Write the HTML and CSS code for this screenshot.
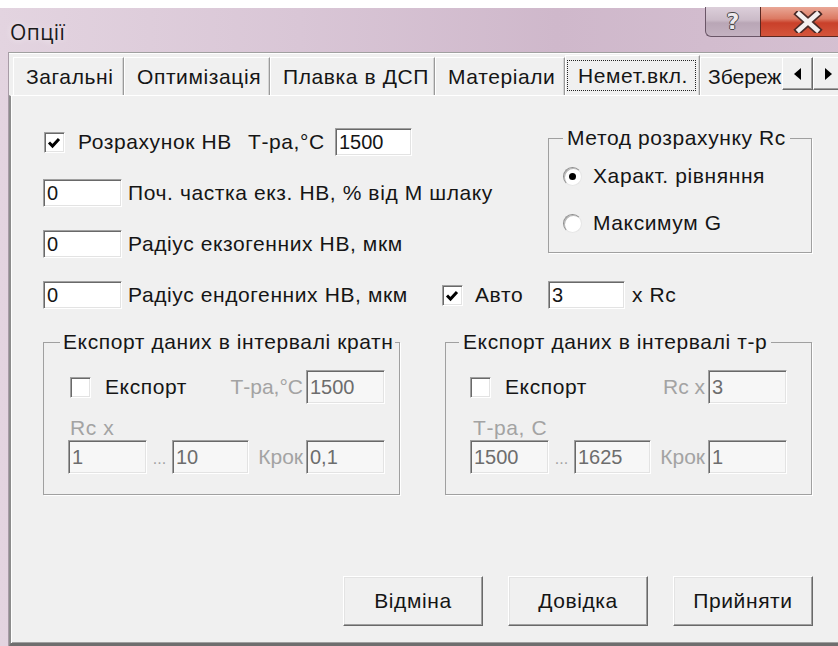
FILE: index.html
```html
<!DOCTYPE html>
<html lang="uk">
<head>
<meta charset="utf-8">
<title>Опції</title>
<link rel="stylesheet" href="styles.css">
</head>
<body>
<div class="window">
  <header class="titlebar">
    <span class="title">Опції</span>
    <div class="caption-btns">
      <div class="cbtn help"><span>?</span></div>
      <div class="cbtn close">
        <svg width="30" height="22" viewBox="0 0 30 22">
          <path d="M6 3 L24 19 M24 3 L6 19" stroke="#4b2b28" stroke-width="8" stroke-linecap="square"/>
          <path d="M6 3 L24 19 M24 3 L6 19" stroke="#f4f0f0" stroke-width="4.6" stroke-linecap="square"/>
        </svg>
      </div>
    </div>
  </header>

  <div class="client">
    <div class="tabstrip">
      <div class="tabs">
        <div class="tab t1">Загальні</div>
        <div class="tab t2">Оптимізація</div>
        <div class="tab t3">Плавка в ДСП</div>
        <div class="tab t4">Матеріали</div>
        <div class="tab t5 sel"><span class="focus">Немет.вкл.</span></div>
        <div class="tab t6">Збереж</div>
      </div>
      <div class="scroll-btns">
        <div class="sbtn"><i class="tri left"></i></div>
        <div class="sbtn"><i class="tri right"></i></div>
      </div>
    </div>

    <div class="sheet">
      <div class="top">
        <div class="params">
          <div class="row">
            <span class="check on"><svg width="21" height="21" viewBox="0 0 21 21"><polyline points="5,10.5 8.5,14 15,7" fill="none" stroke="#000" stroke-width="3"/></svg></span>
            <span class="lbl w-calc">Розрахунок НВ</span>
            <span class="lbl w-temp">Т-ра,°С</span>
            <span class="edit e-temp">1500</span>
          </div>
          <div class="row">
            <span class="edit e-num">0</span>
            <span class="lbl after-edit">Поч. частка екз. НВ, % від М шлаку</span>
          </div>
          <div class="row">
            <span class="edit e-num">0</span>
            <span class="lbl after-edit">Радіус екзогенних НВ, мкм</span>
          </div>
        </div>
        <fieldset class="group method">
          <legend>Метод розрахунку Rc</legend>
          <div class="radio-row"><span class="radio on"></span>Характ. рівняння</div>
          <div class="radio-row second"><span class="radio"></span>Максимум G</div>
        </fieldset>
      </div>

      <div class="row row-d">
        <span class="edit e-num">0</span>
        <span class="lbl after-edit w-endo">Радіус ендогенних НВ, мкм</span>
        <span class="check on"><svg width="21" height="21" viewBox="0 0 21 21"><polyline points="5,10.5 8.5,14 15,7" fill="none" stroke="#000" stroke-width="3"/></svg></span>
        <span class="lbl w-auto">Авто</span>
        <span class="edit e-mult">3</span>
        <span class="lbl x-rc">x Rc</span>
      </div>

      <div class="exports">
        <fieldset class="group export ex-left">
          <legend>Експорт даних в інтервалі кратн</legend>
          <div class="ex-grid">
            <div class="ex-head">
              <span class="check"></span>
              <span class="lbl ex-name">Експорт</span>
              <span class="lbl dis push">Т-ра,°С</span>
            </div>
            <span class="edit big dis-edit">1500</span>
            <span class="lbl dis sub">Rc x</span>
            <span class="edit big dis-edit">1</span>
            <span class="lbl dis dots">...</span>
            <span class="edit big dis-edit">10</span>
            <span class="lbl dis step">Крок</span>
            <span class="edit big dis-edit">0,1</span>
          </div>
        </fieldset>
        <fieldset class="group export ex-right">
          <legend>Експорт даних в інтервалі т-р</legend>
          <div class="ex-grid">
            <div class="ex-head">
              <span class="check"></span>
              <span class="lbl ex-name">Експорт</span>
              <span class="lbl dis push">Rc x</span>
            </div>
            <span class="edit big dis-edit">3</span>
            <span class="lbl dis sub">Т-ра, С</span>
            <span class="edit big dis-edit">1500</span>
            <span class="lbl dis dots">...</span>
            <span class="edit big dis-edit">1625</span>
            <span class="lbl dis step">Крок</span>
            <span class="edit big dis-edit">1</span>
          </div>
        </fieldset>
      </div>

      <div class="buttons">
        <button class="btn">Відміна</button>
        <button class="btn">Довідка</button>
        <button class="btn">Прийняти</button>
      </div>
    </div>
  </div>
</div>
</body>
</html>
```

FILE: styles.css
```css
* { box-sizing: border-box; }

html, body {
  margin: 0;
  padding: 0;
}

body {
  width: 838px;
  height: 646px;
  overflow: hidden;
  background: #ffffff;
  font-family: "Liberation Sans", Arial, sans-serif;
  font-size: 21px;
  letter-spacing: 0.6px;
  color: #151515;
}

/* ---------- window frame ---------- */
.window {
  margin-top: 8px;
  width: 856px;
  height: 638px;
  padding-left: 8px;
  display: flex;
  flex-direction: column;
  background: linear-gradient(90deg, #e3d4e0 0%, #d9c6d6 35%, #cfb8cb 65%, #d5c0d1 100%);
}

.titlebar {
  height: 44px;
  flex: none;
  display: flex;
  align-items: flex-start;
}

.title {
  font-family: "Open Sans", "Liberation Sans", sans-serif;
  font-size: 21px;
  letter-spacing: 0.4px;
  line-height: 24px;
  padding: 12px 0 0 2px;
  color: #1a1a1a;
  text-shadow: 0 0 6px rgba(255, 255, 255, 0.7);
}

.caption-btns {
  margin-left: auto;
  margin-top: -1px;
  display: flex;
}

.cbtn {
  height: 30px;
  display: flex;
  align-items: center;
  justify-content: center;
  border: 1px solid #6a5667;
  border-top: none;
}

.cbtn.help {
  width: 55px;
  border-radius: 0 0 0 6px;
  border-right: none;
  background: linear-gradient(180deg, #dccfda 0%, #cbbbc8 45%, #b9a6b6 55%, #c4b2c1 100%);
}

.cbtn.help span {
  font-family: "DejaVu Sans", sans-serif;
  font-weight: bold;
  font-size: 22px;
  line-height: 1;
  letter-spacing: 0;
  color: #eeeaee;
  text-shadow: 1px 0 0 #444, -1px 0 0 #444, 0 1px 0 #444, 0 -1px 0 #444;
}

.cbtn.close {
  width: 96px;
  border-color: #5b2820;
  border-radius: 0 0 6px 0;
  background: linear-gradient(180deg, #e9a796 0%, #dc7a63 40%, #c9402a 55%, #d4553b 100%);
}

/* ---------- client area ---------- */
.client {
  flex: 1;
  display: flex;
  flex-direction: column;
  background: #f0f0f0;
  border-top: 1px solid #a0a0a0;
  border-left: 1px solid #a89ca7;
  box-shadow: inset 0 1px 0 #ffffff;
  padding-top: 2px;
}

.tabstrip {
  height: 40px;
  flex: none;
  display: flex;
  padding-left: 4px;
}

.tabs {
  width: 769px;
  flex: none;
  display: flex;
  align-items: flex-end;
  overflow: hidden;
}

.tab {
  flex: none;
  height: 38px;
  display: flex;
  align-items: center;
  padding-left: 12px;
  white-space: nowrap;
  border-top: 1px solid #ffffff;
  border-left: 1px solid #ffffff;
  border-right: 1px solid #9a9a9a;
  box-shadow: inset -1px 0 0 #d4d4d4;
}

.t1 { width: 111px; }
.t2 { width: 146px; }
.t3 { width: 165px; }
.t4 { width: 130px; }
.t5 { width: 135px; }

.t6 {
  width: 82px;
  padding-left: 7px;
  letter-spacing: 0;
  border-right: none;
  box-shadow: none;
}

.tab.sel {
  height: 40px;
  padding: 4px 3px 4px 1px;
  align-items: stretch;
}

.focus {
  flex: 1;
  display: flex;
  align-items: center;
  padding-left: 10px;
  border: 1px dotted #222;
}

.scroll-btns {
  display: flex;
  margin-top: 2px;
}

.sbtn {
  width: 31px;
  height: 33px;
  display: flex;
  align-items: center;
  justify-content: center;
  background: #f0f0f0;
  border: 1px solid;
  border-color: #ffffff #696969 #696969 #ffffff;
  box-shadow: inset -1px -1px 0 #a0a0a0;
}

.tri {
  width: 0;
  height: 0;
  border-top: 6px solid transparent;
  border-bottom: 6px solid transparent;
}

.tri.left { border-right: 7px solid #000; }
.tri.right { border-left: 7px solid #000; }

/* ---------- tab sheet ---------- */
.sheet {
  flex: 1;
  border-top: 1px solid #ffffff;
  border-left: 2px solid #8c8c8c;
  border-bottom: 3px solid #6e6e6e;
  box-shadow: inset 1px 0 0 #ffffff, inset 0 -1px 0 #a0a0a0;
  padding: 32px 0 0 32px;
}

.top {
  display: grid;
  grid-template-columns: 505px 264px;
  align-items: start;
}

.params {
  display: flex;
  flex-direction: column;
  gap: 23px;
}

.row {
  height: 28px;
  display: flex;
  align-items: center;
}

.lbl {
  flex: none;
  white-space: nowrap;
  line-height: 24px;
}

.check {
  flex: none;
  width: 21px;
  height: 21px;
  background: #ffffff;
  border: 1px solid;
  border-color: #a0a0a0 #ffffff #ffffff #a0a0a0;
  box-shadow: inset 1px 1px 0 #696969, inset -1px -1px 0 #e3e3e3;
}

.check svg { display: block; margin: -1px 0 0 -1px; }

.params .check { margin-left: 1px; }
.w-calc { margin-left: 13px; width: 170px; }
.w-temp { width: 87px; }

.edit {
  flex: none;
  height: 28px;
  display: flex;
  align-items: center;
  padding-left: 3px;
  background: #ffffff;
  border: 1px solid;
  border-color: #a0a0a0 #ffffff #ffffff #a0a0a0;
  box-shadow: inset 1px 1px 0 #696969, inset -1px -1px 0 #e3e3e3;
  font-size: 20px;
  letter-spacing: 0;
  white-space: nowrap;
}

.e-temp { width: 77px; }
.e-num { width: 79px; }
.e-mult { width: 77px; }
.after-edit { margin-left: 6px; }

/* group boxes */
.group {
  margin: 0;
  min-width: 0;
  border: 1px solid #a0a0a0;
  box-shadow: 1px 1px 0 #ffffff;
}

.group legend {
  line-height: 24px;
  padding: 0 4px;
  white-space: nowrap;
}

.method {
  margin-top: -2px;
  padding: 11px 0 14px 14px;
}

.radio-row {
  height: 30px;
  display: flex;
  align-items: center;
  gap: 11px;
}

.radio-row.second { margin-top: 17px; }

.radio {
  flex: none;
  width: 19px;
  height: 19px;
  border-radius: 50%;
  background: #ffffff;
  border: 1px solid;
  border-color: #8e8e8e #e6e6e6 #e6e6e6 #8e8e8e;
  box-shadow: inset 1px 1px 0 #b9b9b9;
  display: flex;
  align-items: center;
  justify-content: center;
}

.radio.on::after {
  content: "";
  width: 7px;
  height: 7px;
  border-radius: 50%;
  background: #000;
}

.row-d { margin-top: 23px; }
.w-endo { width: 314px; }
.w-auto { margin-left: 12px; width: 73px; }
.x-rc { margin-left: 7px; }

/* export groups */
.exports {
  display: flex;
  gap: 45px;
  margin-top: 21px;
}

.export {
  padding: 16px 0 20px 24px;
}

.ex-left { width: 357px; }
.ex-right { width: 367px; }

.ex-left legend {
  margin-left: -8px;
  padding: 0 1px 0 3px;
  max-width: 338px;
  overflow: hidden;
}

.ex-right legend { margin-left: -11px; }

.ex-grid {
  display: grid;
  grid-template-columns: 79px 25px 77px 57px 79px;
}

.ex-head {
  grid-column: 1 / 5;
  display: flex;
  align-items: center;
}

.ex-head .check { margin-left: 2px; }
.ex-right .ex-head .check { margin-left: 0; }
.ex-name { margin-left: 14px; }

.push {
  margin-left: auto;
  padding-right: 3px;
  letter-spacing: 0;
}

.dis { color: #a3a3a3; }

.edit.big { height: 34px; }

.dis-edit {
  background: #f7f7f7;
  color: #6d6d6d;
}

.sub {
  grid-column: 1 / -1;
  height: 36px;
  display: flex;
  align-items: flex-end;
  padding-left: 2px;
}

.ex-right .sub { padding-left: 3px; }

.dots {
  display: flex;
  align-items: flex-end;
  justify-content: center;
  padding-bottom: 3px;
  font-size: 16px;
  letter-spacing: 0;
}

.step {
  display: flex;
  align-items: center;
  justify-content: flex-end;
  padding-right: 3px;
  letter-spacing: 0;
}

/* dialog buttons */
.buttons {
  display: flex;
  gap: 25px;
  margin-top: 81px;
  padding-left: 300px;
}

.btn {
  width: 140px;
  height: 50px;
  padding: 0;
  font: inherit;
  letter-spacing: 0.6px;
  color: #151515;
  background: #f0f0f0;
  border: 1px solid;
  border-color: #ffffff #696969 #696969 #ffffff;
  box-shadow: inset -1px -1px 0 #a0a0a0, inset 1px 1px 0 #e3e3e3;
}
```
